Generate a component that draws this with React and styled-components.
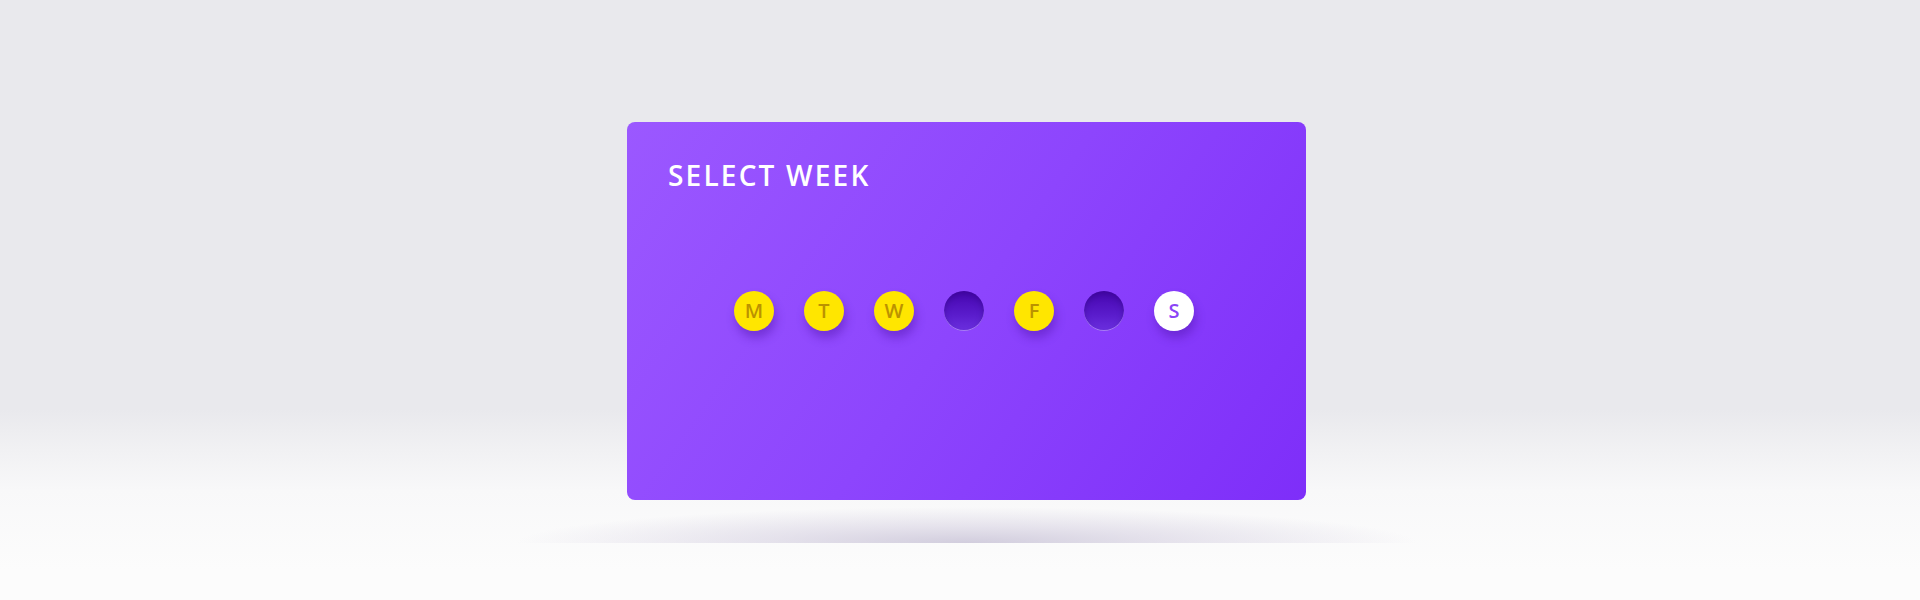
import styled, { createGlobalStyle } from "styled-components";

const GlobalStyle = createGlobalStyle`
  html, body {
    margin: 0;
    padding: 0;
  }
  body {
    font-family: "Open Sans", "Liberation Sans", sans-serif;
    background: #fcfcfc;
  }
`;

const Page = styled.div`
  width: 1920px;
  height: 600px;
  overflow: hidden;
  display: flex;
  flex-direction: column;
  align-items: center;
  padding-top: 122px;
  padding-left: 13px;
  box-sizing: border-box;
  background: linear-gradient(
    to bottom,
    #e9e9ed 0px,
    #e9e9ed 410px,
    #f1f1f3 450px,
    #f8f8f9 490px,
    #fcfcfc 570px
  );
`;

const Card = styled.div`
  width: 679px;
  height: 378px;
  box-sizing: border-box;
  border-radius: 8px;
  padding: 39px 41px;
  display: flex;
  flex-direction: column;
  background: linear-gradient(125deg, #9b58ff 0%, #8d45fd 50%, #7e2ef9 100%);
`;

const Title = styled.h1`
  margin: 0;
  font-size: 28px;
  line-height: 28px;
  font-weight: 600;
  color: #ffffff;
  letter-spacing: 2.2px;
`;

const Days = styled.div`
  margin-top: 102px;
  display: flex;
  justify-content: center;
  gap: 30px;
  padding-right: 5px;
`;

const Day = styled.div`
  width: 40px;
  height: 40px;
  border-radius: 50%;
  display: flex;
  align-items: center;
  justify-content: center;
  font-size: 20px;
  font-weight: 600;
  line-height: 1;
  color: ${(p) => (p.$variant === "white" ? "#8b45f6" : "#bb9200")};
  background: ${(p) =>
    p.$variant === "off"
      ? "linear-gradient(to bottom, #4706b0 0%, #5a1ccc 60%, #6c30e0 100%)"
      : p.$variant === "white"
      ? "#ffffff"
      : "#ffe600"};
  box-shadow: ${(p) =>
    p.$variant === "off"
      ? "inset 0 -1px 0 rgba(190, 150, 255, 0.75), inset 0 3px 6px rgba(40, 0, 110, 0.35)"
      : "2px 7px 10px rgba(80, 20, 170, 0.45)"};
`;

const FloorShadow = styled.div`
  width: 900px;
  height: 36px;
  margin-top: 7px;
  background: radial-gradient(
    ellipse 50% 100% at 50% 100%,
    rgba(205, 200, 218, 0.9) 0%,
    rgba(215, 210, 226, 0.6) 45%,
    rgba(230, 228, 236, 0) 100%
  );
`;

const days = [
  { label: "M", variant: "on" },
  { label: "T", variant: "on" },
  { label: "W", variant: "on" },
  { label: "", variant: "off" },
  { label: "F", variant: "on" },
  { label: "", variant: "off" },
  { label: "S", variant: "white" },
];

const App = () => {
  return (
    <>
      <GlobalStyle />
      <Page>
        <Card>
          <Title>SELECT WEEK</Title>
          <Days>
            {days.map((d, i) => (
              <Day key={i} $variant={d.variant}>
                {d.label}
              </Day>
            ))}
          </Days>
        </Card>
        <FloorShadow />
      </Page>
    </>
  );
};

export default App;
